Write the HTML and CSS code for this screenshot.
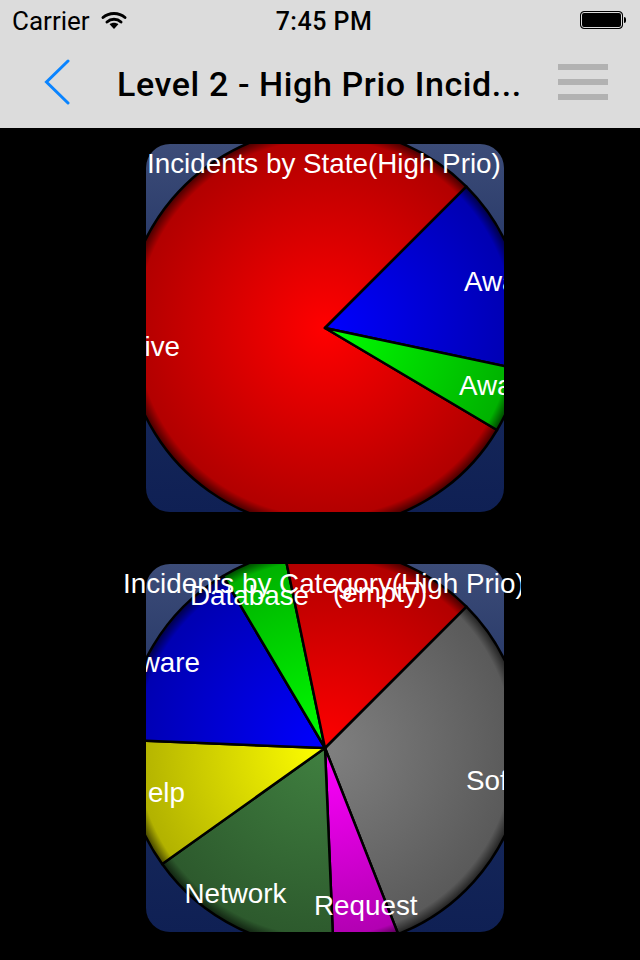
FILE: index.html

```html
<!DOCTYPE html>
<html lang="en">
<head>
  <meta charset="UTF-8" />
  <meta name="viewport" content="width=device-width, initial-scale=1.0"/>
  <title>Level 2 - High Prio Incidents</title>
  <link rel="stylesheet" href="styles.css">
</head>
<body>
  <header class="header">
    <div class="status-bar">
      <div class="status-left">
        <span class="carrier">Carrier</span>
        <svg class="wifi" width="28" height="20" viewBox="0 0 28 20">
          <path d="M3 7.5 C9 2 19 2 25 7.5" class="wifi-arc"/>
          <path d="M7 12 C11 8.4 17 8.4 21 12" class="wifi-arc"/>
          <path d="M9.6 14.2 C12 12.2 16 12.2 18.4 14.2 L14 19 Z" class="wifi-dot"/>
        </svg>
      </div>
      <span class="time">7:45 PM</span>
      <div class="battery">
        <div class="battery-body"></div>
        <div class="battery-tip"></div>
      </div>
    </div>
    <nav class="nav-bar">
      <svg class="back" width="26" height="46" viewBox="0 0 26 46">
        <path d="M24 2 L2.5 23 L24 44" class="back-line"/>
      </svg>
      <div class="nav-title">Level 2 - High Prio Incid...</div>
      <div class="menu">
        <span class="menu-bar"></span>
        <span class="menu-bar"></span>
        <span class="menu-bar"></span>
      </div>
    </nav>
  </header>

  <main class="charts">
    <svg class="chart" width="398" height="368" viewBox="-202 -184 398 368">
      <defs>
        <linearGradient id="cardFill" x1="0" y1="0" x2="0" y2="1">
          <stop offset="0" class="card-top"/>
          <stop offset="0.55" class="card-mid"/>
          <stop offset="1" class="card-bottom"/>
        </linearGradient>
        <clipPath id="cardClip"><rect x="-179" y="-184" width="358" height="368" rx="24"/></clipPath>
        <radialGradient id="red" gradientUnits="userSpaceOnUse" cx="0" cy="0" r="200">
          <stop offset="0" stop-color="#ff0000"/><stop offset="0.94" stop-color="#b20000"/><stop offset="1" stop-color="#400000"/>
        </radialGradient>
        <radialGradient id="blue" gradientUnits="userSpaceOnUse" cx="0" cy="0" r="200">
          <stop offset="0" stop-color="#0000ff"/><stop offset="0.94" stop-color="#0000b2"/><stop offset="1" stop-color="#000040"/>
        </radialGradient>
        <radialGradient id="green" gradientUnits="userSpaceOnUse" cx="0" cy="0" r="200">
          <stop offset="0" stop-color="#00ff00"/><stop offset="0.94" stop-color="#00b200"/><stop offset="1" stop-color="#004000"/>
        </radialGradient>
        <radialGradient id="yellow" gradientUnits="userSpaceOnUse" cx="0" cy="0" r="200">
          <stop offset="0" stop-color="#ffff00"/><stop offset="0.94" stop-color="#b2b200"/><stop offset="1" stop-color="#404000"/>
        </radialGradient>
        <radialGradient id="magenta" gradientUnits="userSpaceOnUse" cx="0" cy="0" r="200">
          <stop offset="0" stop-color="#ff00ff"/><stop offset="0.94" stop-color="#b200b2"/><stop offset="1" stop-color="#400040"/>
        </radialGradient>
        <radialGradient id="gray" gradientUnits="userSpaceOnUse" cx="0" cy="0" r="200">
          <stop offset="0" stop-color="#808080"/><stop offset="0.94" stop-color="#5a5a5a"/><stop offset="1" stop-color="#202020"/>
        </radialGradient>
        <radialGradient id="forest" gradientUnits="userSpaceOnUse" cx="0" cy="0" r="200">
          <stop offset="0" stop-color="#408040"/><stop offset="0.94" stop-color="#2d5a2d"/><stop offset="1" stop-color="#102010"/>
        </radialGradient>
      </defs>
      <rect class="card" x="-179" y="-184" width="358" height="368" rx="24"/>
      <g clip-path="url(#cardClip)">
        <path class="slice red" d="M0 0 L172 102 A200 200 0 1 1 141.4 -141.4 Z"/>
        <path class="slice blue" d="M0 0 L141.4 -141.4 A200 200 0 0 1 195.6 41.6 Z"/>
        <path class="slice green" d="M0 0 L195.6 41.6 A200 200 0 0 1 172 102 Z"/>
        <text class="label" x="-145" y="28" text-anchor="end">Active</text>
        <text class="label" x="139" y="-37">Awaiting</text>
        <text class="label" x="134" y="67">Awaiting</text>
      </g>
      <text class="label" x="-178" y="-155">Incidents by State(High Prio)</text>
    </svg>

    <svg class="chart" width="398" height="368" viewBox="-202 -184 398 368">
      <rect class="card" x="-179" y="-184" width="358" height="368" rx="24"/>
      <g clip-path="url(#cardClip)">
        <path class="slice gray" d="M0 0 L141.4 -141.4 A200 200 0 0 1 73.2 186.1 Z"/>
        <path class="slice magenta" d="M0 0 L73.2 186.1 A200 200 0 0 1 8.4 199.8 Z"/>
        <path class="slice forest" d="M0 0 L8.4 199.8 A200 200 0 0 1 -162.8 116.1 Z"/>
        <path class="slice yellow" d="M0 0 L-162.8 116.1 A200 200 0 0 1 -199.9 -8 Z"/>
        <path class="slice blue" d="M0 0 L-199.9 -8 A200 200 0 0 1 -102 -172 Z"/>
        <path class="slice green" d="M0 0 L-102 -172 A200 200 0 0 1 -40.7 -195.8 Z"/>
        <path class="slice red" d="M0 0 L-40.7 -195.8 A200 200 0 0 1 141.4 -141.4 Z"/>
        <text class="label" x="-125" y="-76" text-anchor="end">Hardware</text>
        <text class="label" x="-140" y="54" text-anchor="end">Help</text>
        <text class="label" x="-140.5" y="155">Network</text>
        <text class="label" x="-11" y="167">Request</text>
        <text class="label" x="141" y="42">Software</text>
      </g>
      <text class="label" x="-202" y="-155">Incidents by Category(High Prio)</text>
      <text class="label" x="-135" y="-143">Database</text>
      <text class="label" x="8" y="-146">(empty)</text>
    </svg>
  </main>
</body>
</html>
```

FILE: styles.css

```css
* { box-sizing: border-box; }
body { margin: 0; background: #000; font-family: Roboto, "Liberation Sans", sans-serif; }

.header { height: 128px; background: #dcdcdc; color: #000; }

.status-bar { height: 40px; display: flex; align-items: center; padding: 2px 14px 0 12px; }
.status-left { flex: 1; display: flex; align-items: center; gap: 10px; }
.carrier { font-size: 26px; }
.wifi { margin-top: -2px; }
.wifi-arc { fill: none; stroke: #000; stroke-width: 3; stroke-linecap: round; }
.wifi-dot { fill: #000; }
.time { font-size: 25px; font-weight: 500; letter-spacing: 0.5px; padding-left: 10px; }
.battery { flex: 1; display: flex; align-items: center; justify-content: flex-end; margin-top: -2px; }
.battery-body { width: 43px; height: 18px; background: #000; border: 1px solid #000; border-radius: 4px; box-shadow: inset 0 0 0 1px #dcdcdc; }
.battery-tip { width: 2px; height: 6px; background: #000; border-radius: 0 2px 2px 0; margin-left: 1px; }

.nav-bar { height: 88px; display: flex; align-items: center; padding: 0 32px 0 44px; }
.back-line { fill: none; stroke: #0a84ff; stroke-width: 3; stroke-linecap: round; }
.back { margin-top: -4px; }
.nav-title { flex: 1; font-size: 34px; font-weight: 500; letter-spacing: 0.6px; padding-left: 47px; white-space: nowrap; }
.menu { width: 50px; display: flex; flex-direction: column; gap: 9px; margin-top: -4px; }
.menu-bar { display: block; height: 6px; background: #b2b2b2; }

.charts { padding: 16px 0 0 123px; display: flex; flex-direction: column; gap: 52px; }
.chart { display: block; }

.card { fill: url(#cardFill); }
.card-top { stop-color: #3c4c78; }
.card-mid { stop-color: #182a5c; }
.card-bottom { stop-color: #0f2054; }

.slice { stroke: #000; stroke-width: 2.5; stroke-linejoin: round; }
.red { fill: url(#red); }
.blue { fill: url(#blue); }
.green { fill: url(#green); }
.yellow { fill: url(#yellow); }
.magenta { fill: url(#magenta); }
.gray { fill: url(#gray); }
.forest { fill: url(#forest); }

.label { fill: #fff; font-family: "Liberation Sans", Arial, sans-serif; font-size: 27.8px; }
```
